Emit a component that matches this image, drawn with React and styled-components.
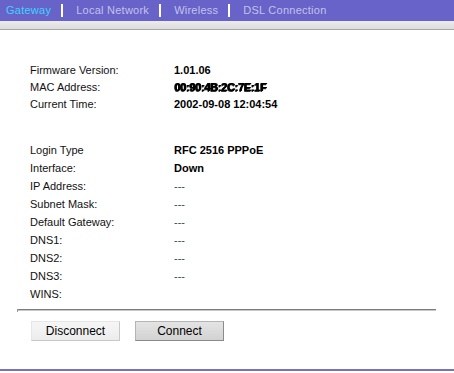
import React from 'react';
import styled, { createGlobalStyle } from 'styled-components';

const GlobalStyle = createGlobalStyle`
  body {
    margin: 0;
    background: #ffffff;
    font-family: 'Liberation Sans', Arial, sans-serif;
  }
`;

const Page = styled.div`
  width: 454px;
  height: 373px;
  display: flex;
  flex-direction: column;
  overflow: hidden;
`;

const TabBar = styled.div`
  height: 21px;
  background: #6763c9;
  display: flex;
  align-items: center;
  padding-left: 6px;
  font-size: 11px;
  letter-spacing: 0.25px;
`;

const Tab = styled.span`
  color: ${p => (p.active ? '#3fd2ff' : '#c4c2ea')};
  line-height: 21px;
`;

const Sep = styled.span`
  width: 2px;
  height: 13px;
  background: #ffffff;
  margin: 0 13px 0 10px;
`;

const Shade = styled.div`
  height: 8px;
  background: linear-gradient(#ececec, #dcdcdc);
  border-bottom: 1px solid #a8a8a8;
`;

const Content = styled.div`
  padding: 31px 0 0 30px;
  font-size: 11px;
  color: #000;
`;

const Group = styled.div`
  display: grid;
  grid-template-columns: 144px auto;
  grid-auto-rows: ${p => p.rowH}px;
  align-items: center;
  margin-bottom: ${p => p.after || 0}px;
`;

const Label = styled.div`
  color: #111;
`;

const Value = styled.div`
  font-weight: ${p => (p.$plain ? 'normal' : 'bold')};
  color: ${p => (p.$plain ? '#444' : '#000')};
`;

const Masked = styled.span`
  display: inline-block;
  font-weight: bold;
  letter-spacing: -0.3px;
  text-shadow: 1px 0 0 #000, 0 1px 0 #333;
  filter: blur(0.6px);
`;

const Rule = styled.div`
  margin: 6px 0 0 17px;
  width: 419px;
  height: 1px;
  background: #7c7c7c;
  border-bottom: 1px solid #c8c8c8;
  position: relative;
  &::before {
    content: '';
    position: absolute;
    left: 0;
    top: 0;
    width: 1px;
    height: 3px;
    background: #9a9a9a;
  }
`;

const ButtonRow = styled.div`
  display: flex;
  gap: 15px;
  margin: 10px 0 0 31px;
`;

const Button = styled.button`
  width: 89px;
  height: 20px;
  padding: 0;
  font-family: 'Liberation Sans', Arial, sans-serif;
  font-size: 12px;
  color: #000;
  border: none;
  border-right: 1px solid ${p => (p.$dark ? '#8a8a8a' : '#c8c8c8')};
  border-bottom: 1px solid ${p => (p.$dark ? '#8a8a8a' : '#c8c8c8')};
  border-left: 1px solid ${p => (p.$dark ? '#b4b4b4' : '#e6e6e6')};
  border-top: 1px solid ${p => (p.$dark ? '#b4b4b4' : '#e6e6e6')};
  background: ${p => (p.$dark ? 'linear-gradient(#e4e4e4, #d2d2d2)' : 'linear-gradient(#f6f6f6, #ececec)')};
`;

const Spacer = styled.div`
  flex: 1;
`;

const BottomLine = styled.div`
  height: 2px;
  background: #7472c4;
  margin-bottom: 2px;
`;

const top = [
  ['Firmware Version:', '1.01.06'],
  ['MAC Address:', '00:90:4B:2C:7E:1F', 'mask'],
  ['Current Time:', '2002-09-08 12:04:54'],
];

const wan = [
  ['Login Type', 'RFC 2516 PPPoE'],
  ['Interface:', 'Down'],
  ['IP Address:', '---', 'plain'],
  ['Subnet Mask:', '---', 'plain'],
  ['Default Gateway:', '---', 'plain'],
  ['DNS1:', '---', 'plain'],
  ['DNS2:', '---', 'plain'],
  ['DNS3:', '---', 'plain'],
  ['WINS:', '', 'plain'],
];

export default function App() {
  return (
    <Page>
      <GlobalStyle />
      <TabBar>
        <Tab active>Gateway</Tab>
        <Sep />
        <Tab>Local Network</Tab>
        <Sep />
        <Tab>Wireless</Tab>
        <Sep />
        <Tab>DSL Connection</Tab>
      </TabBar>
      <Shade />
      <Content>
        <Group rowH={17} after={29}>
          {top.map(([l, v, k]) => (
            <React.Fragment key={l}>
              <Label>{l}</Label>
              <Value>{k === 'mask' ? <Masked>{v}</Masked> : v}</Value>
            </React.Fragment>
          ))}
        </Group>
        <Group rowH={18}>
          {wan.map(([l, v, k]) => (
            <React.Fragment key={l}>
              <Label>{l}</Label>
              <Value $plain={k === 'plain'}>{v}</Value>
            </React.Fragment>
          ))}
        </Group>
      </Content>
      <Rule />
      <ButtonRow>
        <Button>Disconnect</Button>
        <Button $dark>Connect</Button>
      </ButtonRow>
      <Spacer />
      <BottomLine />
    </Page>
  );
}
